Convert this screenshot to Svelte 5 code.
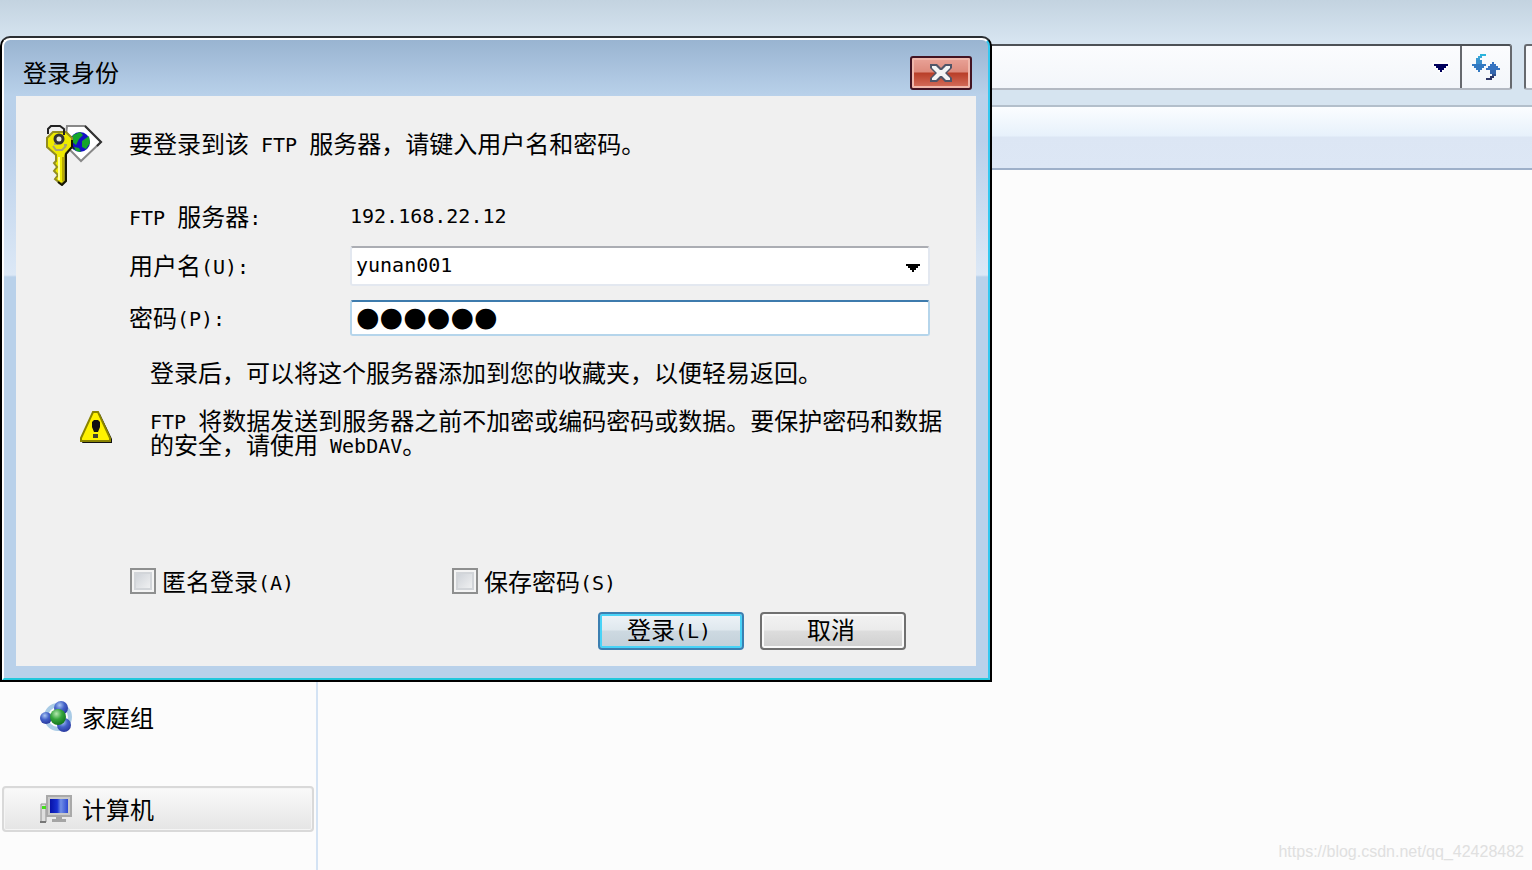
<script>
	let user = 'yunan001';
	let password = '123456';
	let anonymous = false;
	let save = false;
	let selected = '计算机';
</script>

<div class="explorer">
	<header>
		<div class="address">
			<input type="text" aria-label="地址" />
			<button class="drop" aria-label="以前的位置">
				<svg width="18" height="12" viewBox="0 0 9 6" shape-rendering="crispEdges">
					<path d="M0 0h9v2h-1v1h-1v1h-1v1h-1v1h-1v-1h-1v-1h-1v-1h-1v-1h-1z" fill="#fff" />
					<path d="M1 1h7v1h-1v1h-1v1h-1v1h-1v-1h-1v-1h-1v-1h-1z" fill="#00005c" />
				</svg>
			</button>
			<button class="refresh" aria-label="刷新">
				<svg width="28" height="26" viewBox="0 0 14 13" shape-rendering="crispEdges">
					<path d="M4 0h3v1h-3z" fill="#2bb5dc" />
					<path d="M3 1h2v1h-2z" fill="#35a9da" />
					<path d="M2 2h2v1h-2z" fill="#3b9bd3" />
					<path d="M2 3h3v2h-3z" fill="#3b8fcd" />
					<path d="M0 5h7v1h-1v1h-1v1h-1v1h-1v-1h-1v-1h-1v-1h-1z" fill="#3279c2" />
					<path d="M10 4h1v1h1v1h1v1h1v1h-7v-1h1v-1h1v-1h1z" fill="#3573c1" />
					<path d="M9 8h3v2h-3z" fill="#3567ae" />
					<path d="M10 10h2v1h-2z" fill="#2f4f8c" />
					<path d="M9 11h2v1h-2zM7 12h3v1h-3z" fill="#2c3565" />
				</svg>
			</button>
		</div>
		<input class="search" type="text" aria-label="搜索" />
	</header>
	<div class="toolbar"></div>
	<div class="main">
		<nav>
			<button class:selected={selected === '家庭组'} on:click={() => (selected = '家庭组')}>
				<svg width="32" height="32" viewBox="0 0 32 32">
					<defs>
						<radialGradient id="blue" cx=".4" cy=".3" r=".7">
							<stop offset="0" stop-color="#a9c6f2" />
							<stop offset=".5" stop-color="#4362c8" />
							<stop offset="1" stop-color="#2a3aa0" />
						</radialGradient>
						<radialGradient id="green" cx=".4" cy=".3" r=".7">
							<stop offset="0" stop-color="#b5e8b0" />
							<stop offset=".5" stop-color="#35a53c" />
							<stop offset="1" stop-color="#13761c" />
						</radialGradient>
					</defs>
					<circle cx="18" cy="16" r="12" fill="none" stroke="#a9cbe6" stroke-width="4" />
					<circle cx="21" cy="7" r="7" fill="url(#blue)" />
					<circle cx="6" cy="17" r="6" fill="url(#blue)" />
					<circle cx="24" cy="24" r="7" fill="url(#blue)" />
					<circle cx="18" cy="16" r="8" fill="url(#green)" />
				</svg>
				家庭组
			</button>
			<button class:selected={selected === '计算机'} on:click={() => (selected = '计算机')}>
				<svg width="32" height="28" viewBox="0 0 32 28">
					<defs>
						<linearGradient id="screen">
							<stop offset="0" stop-color="#0712a8" />
							<stop offset=".4" stop-color="#1730d0" />
							<stop offset=".6" stop-color="#718fe6" />
							<stop offset="1" stop-color="#2c48d2" />
						</linearGradient>
					</defs>
					<path d="M1 9h5v18h-5z" fill="#dedede" stroke="#8f8f8f" />
					<path d="M2 11h4v3h-4z" fill="#45dd1c" />
					<path d="M0 26h6v2h-6z" fill="#777" />
					<path d="M7 1h24v20h-24z" fill="#c9c9c9" stroke="#a9a9a9" stroke-width="2" />
					<path d="M10 4h18v14h-18z" fill="url(#screen)" />
					<path d="M16 22h6v2h4v3h-14v-3h4z" fill="#a5a5a5" />
				</svg>
				计算机
			</button>
		</nav>
	</div>
	<div class="watermark">https://blog.csdn.net/qq_42428482</div>
</div>

<div class="dialog" role="dialog" aria-labelledby="title">
	<div class="frame">
		<div class="title">
			<h1 id="title">登录身份</h1>
			<button class="close" aria-label="关闭">
				<svg width="24" height="20" viewBox="0 0 24 20">
					<path d="M1 1h7l4 4 4-4h7v4l-5 5 5 5v4h-7l-4-4-4 4h-7v-4l5-5-5-5z" fill="#505568" />
					<path d="M3 3h4l5 5 5-5h4v2l-5 5 5 5v2h-4l-5-5-5 5h-4v-2l5-5-5-5z" fill="#f4f4f4" />
					<path d="M9 7h6v6h-6z" fill="#f4f4f4" />
				</svg>
			</button>
		</div>

		<form on:submit|preventDefault>
			<div class="intro">
				<svg width="58" height="62" viewBox="0 0 58 62">
					<path d="M22 2h18l16 16-20 19-16-16z" fill="#fff" stroke="#888" stroke-width="2" />
					<path d="M40 2l16 16-4 4" fill="none" stroke="#333" stroke-width="2" />
					<circle cx="35" cy="18" r="10" fill="#1510c4" />
					<path d="M28 11l7-3 3 3-4 4-3 6-5-4zM37 17l7-5 1 7-4 6-4-2zM29 23l5 1 2 4-5-1z" fill="#14a52c" />
					<path d="M26 12v9l3 4" fill="none" stroke="#111c45" stroke-width="2" />
					<path d="M8 8h13l6 6v9l-6 6-1 3v25l-4 3-6-5 3-4-4-4 3-4-3-4 2-2v-6l-9-8v-9z" fill="#eeea00" stroke="#938d20" stroke-width="2" />
					<path d="M27 16v7l-6 7v27l-4 4-4-3" fill="none" stroke="#151500" stroke-width="2" />
					<path d="M14 33v23" stroke="#ffffa0" stroke-width="2" />
					<path d="M18 33v24" stroke="#b7a900" stroke-width="2" />
					<path d="M8 22l3 4h6l4-4M9 20h4M19 21h3" fill="none" stroke="#aaa570" stroke-width="2" />
					<circle cx="14" cy="15" r="4" fill="#e8e8df" stroke="#333" stroke-width="3" />
					<path d="M3 10v-5l3-3h9l4 3v6" fill="none" stroke="#222" stroke-width="2" />
				</svg>
				<p>要登录到该<span class="en">&nbsp;FTP&nbsp;</span>服务器，请键入用户名和密码。</p>
			</div>

			<div class="row server">
				<span class="label"><span class="en">FTP&nbsp;</span>服务器<span class="en">:</span></span>
				<span class="en">192.168.22.12</span>
			</div>
			<div class="row">
				<label for="user">用户名<span class="en">(U):</span></label>
				<div class="combo">
					<select id="user" bind:value={user}>
						<option>yunan001</option>
					</select>
					<svg width="14" height="8" viewBox="0 0 7 4" shape-rendering="crispEdges">
						<path d="M0 0h7v1h-1v1h-1v1h-1v1h-1v-1h-1v-1h-1v-1h-1z" />
					</svg>
				</div>
			</div>
			<div class="row">
				<label for="password">密码<span class="en">(P):</span></label>
				<input id="password" type="password" bind:value={password} />
			</div>

			<p class="note">登录后，可以将这个服务器添加到您的收藏夹，以便轻易返回。</p>

			<div class="warning">
				<svg width="32" height="34" viewBox="0 0 32 34">
					<path d="M14 4h6l12 25v4h-30z" fill="#111" />
					<path d="M13 2h5l12 26v3h-29v-3z" fill="#fff200" stroke="#8a8400" stroke-width="2" />
					<path d="M14 10h4l2 2v5l-2 5h-4l-2-5v-5z" fill="#111" />
					<path d="M13 24h5v4h-5z" fill="#44442e" />
				</svg>
				<p><span class="en">FTP&nbsp;</span>将数据发送到服务器之前不加密或编码密码或数据。要保护密码和数据的安全，请使用<span class="en">&nbsp;WebDAV</span>。</p>
			</div>

			<div class="checks">
				<label>
					<input type="checkbox" bind:checked={anonymous} />
					<span>匿名登录<span class="en">(A)</span></span>
				</label>
				<label>
					<input type="checkbox" bind:checked={save} />
					<span>保存密码<span class="en">(S)</span></span>
				</label>
			</div>

			<div class="buttons">
				<button class="default" type="submit">登录<span class="en">(L)</span></button>
				<button type="button">取消</button>
			</div>
		</form>
	</div>
</div>

<style>
	:global(body) {
		margin: 0;
		background: #fcfcfc;
	}
	.explorer, .dialog, button, input, select {
		font-family: "Noto Sans CJK SC", sans-serif;
		font-size: 24px;
		line-height: 24px;
		color: #000;
	}
	.explorer *, .dialog, .dialog * {
		box-sizing: border-box;
	}
	.explorer {
		position: relative;
		display: flex;
		flex-direction: column;
		min-height: 100vh;
		overflow: hidden;
	}
	p, h1 {
		margin: 0;
	}
	svg {
		display: block;
		flex: none;
	}
	.en {
		font-family: "DejaVu Sans Mono", monospace;
		font-size: 20px;
		line-height: 16px;
		vertical-align: 1px;
	}

	header {
		display: flex;
		gap: 12px;
		padding: 44px 0 15px 120px;
		background: linear-gradient(#c3d3e0, #d6e4f0 40px);
	}
	.address {
		flex: 1;
		display: flex;
		height: 46px;
		border: 2px solid #66696e;
		border-top-color: #4d5156;
		border-bottom-color: #b3b9c2;
		border-radius: 3px;
		background: linear-gradient(#fbfcfe, #f3f6fa);
	}
	.address input {
		flex: 1;
		min-width: 0;
		border: 0;
		background: none;
	}
	.address button {
		display: flex;
		align-items: center;
		justify-content: center;
		padding: 0;
		border: 0;
		background: none;
	}
	.address .drop {
		width: 38px;
		padding-top: 2px;
	}
	.address .refresh {
		width: 50px;
		border-left: 2px solid #66696e;
	}
	.search {
		width: 8px;
		height: 46px;
		padding: 0;
		border: 2px solid #66696e;
		border-right: 0;
		border-bottom-color: #b3b9c2;
		border-radius: 3px 0 0 3px;
		background: #f8fafd;
	}
	.toolbar {
		height: 65px;
		border-top: 2px solid #b3bfcb;
		border-bottom: 2px solid #9eb0c9;
		background: linear-gradient(#fbfdff, #e7f1fb 29px, #dce6f4 30px, #dde7f5);
	}
	.main {
		flex: 1;
		display: flex;
	}
	nav {
		display: flex;
		flex-direction: column;
		gap: 46px;
		width: 318px;
		padding: 524px 2px 38px;
		border-right: 2px solid #d4e3f4;
	}
	nav button {
		display: flex;
		align-items: center;
		gap: 10px;
		height: 46px;
		padding: 0 36px;
		border: 2px solid transparent;
		border-radius: 4px;
		background: none;
	}
	nav .selected {
		border-color: #d9d9d9;
		background: linear-gradient(#fafafa, #e5e5e5);
		box-shadow: inset 0 0 0 1px #f5f5f5;
	}
	.watermark {
		position: absolute;
		right: 8px;
		bottom: 6px;
		font-family: "Liberation Sans", sans-serif;
		font-size: 16px;
		color: #e0e0e0;
	}

	.dialog {
		position: absolute;
		left: 0;
		top: 36px;
		border: 2px solid #000;
		border-top-color: #2c2f33;
		border-radius: 10px 10px 0 0;
		background: #000;
	}
	.frame {
		padding: 0 12px 12px;
		border: 2px solid #fff;
		border-right-color: #33c8f0;
		border-bottom-color: #22c8dc;
		border-radius: 8px 8px 0 0;
		background: linear-gradient(#99b4d1, #b9d1ea 56px, #bad0ea 100px, #dce8f6 235px, #b9d1ea 237px);
	}
	.title {
		display: flex;
		align-items: center;
		justify-content: space-between;
		height: 56px;
		padding: 10px 4px 0 7px;
	}
	h1 {
		padding-bottom: 2px;
		font-size: 24px;
		font-weight: 400;
	}
	.close {
		display: flex;
		align-items: center;
		justify-content: center;
		width: 62px;
		height: 34px;
		padding: 0;
		border: 2px solid #431422;
		border-radius: 3px;
		box-shadow: inset 0 0 0 2px #f0b8ac;
		background: linear-gradient(#e9a398, #dd8a7c 14px, #b83e28 15px, #d6705e);
	}
	form {
		padding-bottom: 16px;
		background: #f0f0f0;
	}
	.intro {
		display: flex;
		gap: 26px;
		padding: 28px 29px 0;
		margin-bottom: 18px;
	}
	.intro p {
		margin-top: 7px;
	}
	.row {
		display: flex;
		align-items: center;
		margin: 0 46px 14px 113px;
	}
	.server {
		margin-bottom: 18px;
	}
	.label, .row label {
		width: 221px;
	}
	.row label {
		padding-bottom: 2px;
	}
	.combo {
		position: relative;
		flex: 1;
	}
	.combo svg {
		position: absolute;
		right: 10px;
		top: 18px;
		pointer-events: none;
	}
	select {
		display: block;
		appearance: none;
		width: 100%;
		height: 40px;
		padding: 0 4px 2px;
		border: 2px solid #e3e8f0;
		border-top-color: #abadb3;
		border-radius: 3px;
		background: #fff;
		font-family: "DejaVu Sans Mono", monospace;
		font-size: 20px;
	}
	#password {
		flex: 1;
		height: 36px;
		padding: 4px 4px 0;
		border: 2px solid #b5d5eb;
		border-top-color: #3d7bad;
		border-radius: 3px;
		outline: 0;
		background: #fff;
		font-family: "DejaVu Sans", sans-serif;
		font-size: 40px;
		-webkit-text-stroke: 9px #000;
	}
	.note {
		margin: 24px 0 24px 134px;
	}
	.warning {
		display: flex;
		gap: 38px;
		padding: 0 30px 0 64px;
	}
	.warning svg {
		margin-top: 2px;
	}
	.warning p {
		width: 796px;
	}
	.checks {
		display: grid;
		grid-template-columns: 322px auto;
		margin: 112px 0 18px 114px;
	}
	.checks label {
		display: flex;
		align-items: center;
		gap: 6px;
	}
	.checks input {
		appearance: none;
		width: 26px;
		height: 26px;
		margin: 0;
		border: 2px solid #8e8f8f;
		box-shadow: inset 0 0 0 2px #f4f4f4, inset 0 0 0 4px #d2d5d9;
		background: linear-gradient(135deg, #c6cbd2, #f8f8f8);
	}
	.checks input:checked {
		background: #4b6097;
	}
	.buttons {
		display: flex;
		justify-content: flex-end;
		gap: 16px;
		padding-right: 70px;
	}
	.buttons button {
		width: 146px;
		height: 38px;
		padding: 0 4px 4px 0;
		border: 2px solid #707070;
		border-radius: 4px;
		box-shadow: inset 0 0 0 2px #fafafa;
		background: linear-gradient(#f2f2f2, #ebebeb 16px, #dddddd 17px, #cfcfcf);
	}
	.buttons .default {
		border-color: #3c7fb1;
		box-shadow: inset 0 0 0 2px #48d3f7;
		background: linear-gradient(#eef3f7, #dfe8ee 16px, #cdd9e1 17px, #c3d0d9);
	}
</style>
